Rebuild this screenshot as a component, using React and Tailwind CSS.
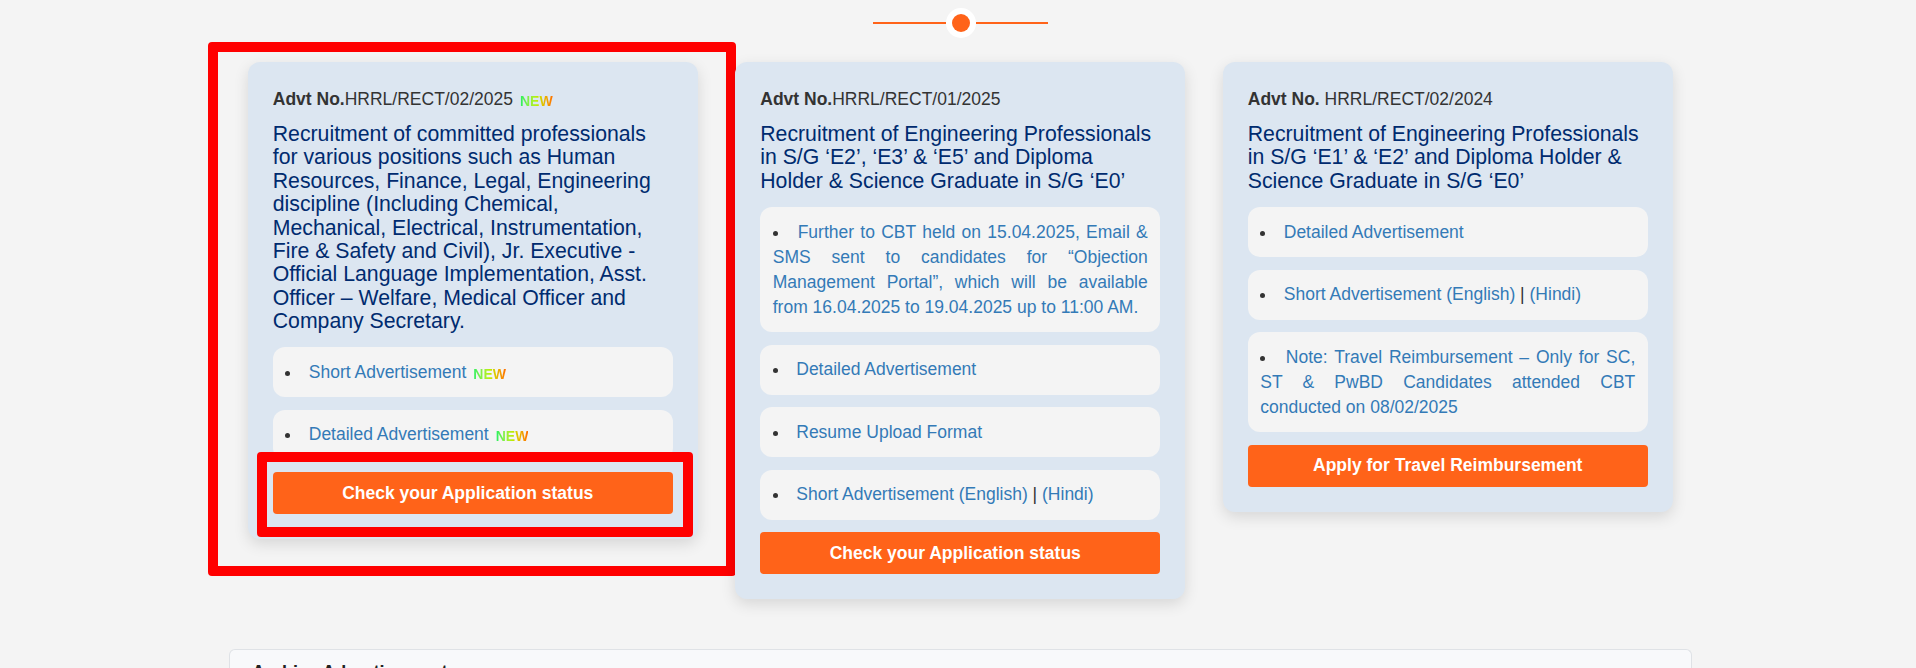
const New = () => (
  <span className="ml-[7px] inline-block bg-linear-to-r from-[#00f060] via-[#b8f000] to-[#ff6a00] bg-clip-text align-[-1px] text-[14px] leading-[12px] font-bold text-transparent">NEW</span>
);

const Item = ({ children, justify }) => (
  <li className={`mb-[12.5px] list-inside list-disc rounded-[12px] bg-[#f4f4f4] px-[12.5px] py-[12.5px] text-[17.5px] leading-[25px] text-[#333] ${justify ? "text-justify" : ""}`}>
    {children}
  </li>
);

const L = ({ children }) => <a className="text-[#337ab7]">{children}</a>;

const Btn = ({ children, trail }) => (
  <button className={`block h-[42px] w-full rounded-[4px] bg-[#ff6319] text-center text-[17.5px] font-bold text-white ${trail ? "pr-[10px]" : ""}`}>{children}</button>
);

const Head = ({ no, sp, badge }) => (
  <p className="text-[17.5px] leading-[25px] text-[#333]"><b>Advt No.</b>{sp ? " " : ""}{no}{badge && <New />}</p>
);

const Title = ({ children }) => (
  <h3 className="mt-[11px] mb-[13.8px] text-[21.25px] leading-[23.4px] font-normal text-[#002b6f]">{children}</h3>
);

const Card = ({ children, over }) => (
  <div className="relative rounded-[12px] bg-[#dce6f1] p-[25px] shadow-[0_5px_15px_rgba(0,0,0,0.12)]">
    {children}
    {over}
  </div>
);

export default function App() {
  return (
    <div className="h-[668px] overflow-hidden bg-[#f4f4f4] font-['Liberation_Sans',Arial,sans-serif]">
      <div className="ml-[229px] w-[1462.5px]">
        <div className="flex h-[62px] items-start justify-center pt-[8px]">
          <div className="mt-[14px] h-[2px] w-[73px] bg-[#ff6319]" />
          <div className="flex h-[30px] w-[30px] items-center justify-center rounded-full bg-white">
            <div className="h-[18px] w-[18px] rounded-full bg-[#ff6319]" />
          </div>
          <div className="mt-[14px] h-[2px] w-[72px] bg-[#ff6319]" />
        </div>
        <div className="grid h-[587px] grid-cols-3 items-start">
          <div className="px-[18.75px]">
            <Card
              over={
                <>
                  <div className="pointer-events-none absolute top-[-20px] right-[-38px] bottom-[-37px] left-[-40px] rounded-[4px] border-[10px] border-[#ff0000]" />
                  <div className="pointer-events-none absolute right-[5px] bottom-[2px] left-[9px] h-[85px] rounded-[4px] border-[10px] border-[#ff0000]" />
                </>
              }
            >
              <Head no="HRRL/RECT/02/2025" badge />
              <Title>Recruitment of committed professionals for various positions such as Human Resources, Finance, Legal, Engineering discipline (Including Chemical, Mechanical, Electrical, Instrumentation, Fire &amp; Safety and Civil), Jr. Executive - Official Language Implementation, Asst. Officer – Welfare, Medical Officer and Company Secretary.</Title>
              <ul>
                <Item><L>Short Advertisement</L><New /></Item>
                <Item><L>Detailed Advertisement</L><New /></Item>
              </ul>
              <Btn trail>Check your Application status</Btn>
            </Card>
          </div>
          <div className="px-[18.75px]">
            <Card>
              <Head no="HRRL/RECT/01/2025" />
              <Title>Recruitment of Engineering Professionals in S/G ‘E2’, ‘E3’ &amp; ‘E5’ and Diploma Holder &amp; Science Graduate in S/G ‘E0’</Title>
              <ul>
                <Item justify><L>Further to CBT held on 15.04.2025, Email &amp; SMS sent to candidates for “Objection Management Portal”, which will be available from 16.04.2025 to 19.04.2025 up to 11:00 AM.</L></Item>
                <Item><L>Detailed Advertisement</L></Item>
                <Item><L>Resume Upload Format</L></Item>
                <Item><L>Short Advertisement (English)</L> | <L>(Hindi)</L></Item>
              </ul>
              <Btn trail>Check your Application status</Btn>
            </Card>
          </div>
          <div className="px-[18.75px]">
            <Card>
              <Head no="HRRL/RECT/02/2024" sp />
              <Title>Recruitment of Engineering Professionals in S/G ‘E1’ &amp; ‘E2’ and Diploma Holder &amp; Science Graduate in S/G ‘E0’</Title>
              <ul>
                <Item><L>Detailed Advertisement</L></Item>
                <Item><L>Short Advertisement (English)</L> | <L>(Hindi)</L></Item>
                <Item justify><L>Note: Travel Reimbursement – Only for SC, ST &amp; PwBD Candidates attended CBT conducted on 08/02/2025</L></Item>
              </ul>
              <Btn>Apply for Travel Reimbursement</Btn>
            </Card>
          </div>
        </div>
        <div className="rounded-t-[6px] border border-b-0 border-[#dfe2e6] bg-[#f8f9fb] px-[22px] pt-[10px]">
          <p className="text-[18px] leading-[24px] font-bold text-[#222]">Archive Advertisement</p>
        </div>
      </div>
    </div>
  );
}
